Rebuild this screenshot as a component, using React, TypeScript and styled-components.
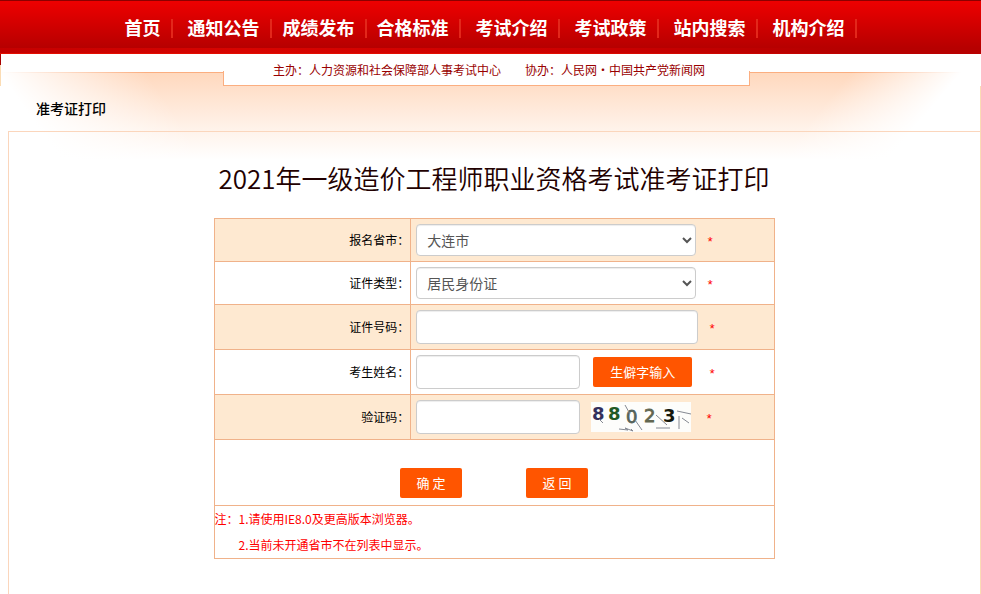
import React from "react";
import styled, { createGlobalStyle } from "styled-components";

const GlobalStyle = createGlobalStyle`
  *, *::before, *::after { box-sizing: border-box; }
  body {
    margin: 0;
    background: #fff;
    color: #000;
    font-family: "Noto Sans CJK SC", sans-serif;
    font-size: 12px;
    line-height: 18px;
  }
`;

const Page = styled.div`
  display: flex;
  flex-direction: column;
  min-height: 100vh;
`;

const NavBar = styled.nav`
  display: flex;
  justify-content: center;
  height: 54px;
  padding-top: 18px;
  border-top: 1px solid #8c0000;
  background:
    linear-gradient(to right, #e30d00 0%, #e30d00 55%, #ba0000 90%) 0 100% / 100% 1px no-repeat,
    linear-gradient(to right, #c40000 0%, #d80400 25%, #cc0000 60%, #b60000 85%) 0 100% / 100% 6px no-repeat,
    linear-gradient(to bottom, #ee0000 0, #b60000 47px);
`;

const NavLink = styled.a<{ $indent: number }>`
  height: 19px;
  padding-left: ${(p) => p.$indent}px;
  padding-right: 10px;
  border-right: 2px solid #e3271b;
  color: #fff;
  font-size: 18px;
  font-weight: 700;
  line-height: 16px;
  text-decoration: none;
  white-space: nowrap;
`;

const Sheet = styled.div`
  display: flex;
  flex: 1;
  flex-direction: column;
  background:
    linear-gradient(#a80000 0 11px, #fbdcb4 11px 32px) 0 0 / 1px 32px no-repeat,
    linear-gradient(#fbdcb4, #fbdcb4) 100% 32px / 1px 100% no-repeat,
    linear-gradient(55deg, #fff 50px, rgba(255, 255, 255, 0) 170px) 0 18px / 50% 88px no-repeat,
    linear-gradient(-50deg, #fff 72px, rgba(255, 255, 255, 0) 156px) 100% 18px / 50% 88px no-repeat,
    linear-gradient(#fbae80, #fbae80) 0 18px / 100% 1px no-repeat,
    linear-gradient(#ffd8bd, #fff2e9 56px, #fff) 0 18px / 100% 88px no-repeat;
`;

const CreditsRow = styled.div`
  display: flex;
  justify-content: center;
  padding-right: 8px;
`;

const Credits = styled.div`
  display: flex;
  justify-content: center;
  gap: 24px;
  width: 527px;
  height: 32px;
  padding: 7px 0 0 5px;
  border-bottom: 1px solid #fbae80;
  background:
    linear-gradient(#fbae80, #fbae80) 0 100% / 1px 14px no-repeat,
    linear-gradient(#fbae80, #fbae80) 100% 100% / 1px 14px no-repeat,
    #fff;
  color: #900;
  white-space: nowrap;
`;

const SectionTitle = styled.h1`
  margin: 0;
  height: 45px;
  padding: 12px 0 0 36px;
  color: #000;
  font-size: 14px;
  font-weight: 500;
  line-height: 20px;
`;

const Panel = styled.main`
  display: flex;
  flex: 1;
  flex-direction: column;
  align-items: center;
  margin-left: 8px;
  padding: 26px 2px 34px 0;
  border-top: 1px solid #fbd6bc;
  border-left: 1px solid #fbd6bc;
`;

const ExamTitle = styled.h2`
  margin: 0 0 20px;
  color: #200;
  font-size: 26px;
  font-weight: 350;
  line-height: 40px;
  text-align: center;
`;

const Form = styled.form`
  width: 100%;
  max-width: 561px;
  border: 1px solid #f0b28a;
`;

const Row = styled.div<{ $tinted?: boolean }>`
  display: grid;
  grid-template-columns: 35% 1fr;
  border-bottom: 1px solid #f0b28a;
  background: ${(p) => (p.$tinted ? "#fee9d1" : "#fff")};
`;

const Label = styled.label`
  display: flex;
  align-items: center;
  justify-content: flex-end;
  padding-right: 1px;
`;

const Field = styled.div`
  display: flex;
  align-items: center;
  padding: 5px;
  border-left: 1px solid #f0b28a;
`;

const Select = styled.select`
  width: 280px;
  height: 32px;
  padding: 0 0 0 6px;
  border: 1px solid #ccc;
  border-radius: 4px;
  background: #fff;
  box-shadow: inset 0 1px 1px rgba(0, 0, 0, 0.075);
  color: #555;
  font-family: inherit;
  font-size: 14px;
`;

const Input = styled.input<{ $short?: boolean }>`
  width: ${(p) => (p.$short ? 164 : 282)}px;
  height: 34px;
  padding: 6px 12px;
  border: 1px solid #ccc;
  border-radius: 4px;
  background: #fff;
  box-shadow: inset 0 1px 1px rgba(0, 0, 0, 0.075);
  color: #555;
  font-family: inherit;
  font-size: 14px;
`;

const Required = styled.span<{ $gap?: number }>`
  margin-left: ${(p) => p.$gap ?? 10}px;
  padding-top: 6px;
  color: #f00;
  font-family: "Liberation Mono", monospace;
  font-size: 13px;
`;

const Button = styled.button`
  min-width: 62px;
  height: 30px;
  padding: 0 16px;
  border: 0;
  border-radius: 2px;
  background: #ff5500;
  color: #fff;
  font-family: inherit;
  font-size: 13px;
  line-height: 30px;
  white-space: nowrap;
`;

const InlineButton = styled(Button)`
  margin-left: 13px;
  padding: 0 17px;
`;

const CaptchaImage = styled.svg`
  display: block;
  margin-left: 11px;
`;

const Actions = styled.div`
  display: flex;
  justify-content: center;
  gap: 64px;
  padding: 28px 0 7px;
  border-bottom: 1px solid #f0b28a;
`;

const Notes = styled.div`
  color: #f00;
  line-height: 26px;
`;

const Note = styled.p<{ $indented?: boolean }>`
  margin: 0;
  padding-left: ${(p) => (p.$indented ? 24 : 0)}px;
`;

const navItems = [
  { text: "首页", indent: 0 },
  { text: "通知公告", indent: 15 },
  { text: "成绩发布", indent: 11 },
  { text: "合格标准", indent: 10 },
  { text: "考试介绍", indent: 15 },
  { text: "考试政策", indent: 15 },
  { text: "站内搜索", indent: 15 },
  { text: "机构介绍", indent: 15 },
];

const digits = [
  { text: "8", x: 1, y: 18, fill: "#33305c", weight: 700 },
  { text: "8", x: 17, y: 18, fill: "#215a26", weight: 700 },
  { text: "0", x: 35, y: 21, fill: "#56635a", weight: 400 },
  { text: "2", x: 53, y: 20, fill: "#626650", weight: 400 },
  { text: "3", x: 72, y: 20, fill: "#15180c", weight: 700 },
];

function Captcha() {
  return (
    <CaptchaImage width="100" height="30" viewBox="0 0 100 30" role="img" aria-label="验证码图片">
      <rect width="100" height="30" fill="#fdfdfb" />
      <g fontFamily="DejaVu Sans, sans-serif" fontSize="18">
        {digits.map((d) => (
          <text
            key={d.x}
            x={d.x}
            y={d.y}
            fill={d.fill}
            fontWeight={d.weight}
            stroke={d.fill}
            strokeWidth={d.weight === 400 ? 0.8 : 0}
          >
            {d.text}
          </text>
        ))}
      </g>
      <g fill="none" stroke="#858992" strokeWidth="1">
        <path d="M8 17l4 4M34 3l5 9M44 18l7 10M65 13l11 10M65 26h14M86 9l14 3M88 14v13M91 16l7 5" />
        <path d="M28 27l9 1l-3-2l8 3l-2-2" />
      </g>
    </CaptchaImage>
  );
}

export default function App() {
  return (
    <Page>
      <GlobalStyle />
      <NavBar>
        {navItems.map((item) => (
          <NavLink key={item.text} href="#" $indent={item.indent}>
            {item.text}
          </NavLink>
        ))}
      </NavBar>
      <Sheet>
        <CreditsRow>
          <Credits>
            <span>主办：人力资源和社会保障部人事考试中心</span>
            <span>协办：人民网・中国共产党新闻网</span>
          </Credits>
        </CreditsRow>
        <SectionTitle>准考证打印</SectionTitle>
        <Panel>
          <ExamTitle>2021年一级造价工程师职业资格考试准考证打印</ExamTitle>
          <Form onSubmit={(e) => e.preventDefault()}>
            <Row $tinted>
              <Label htmlFor="province">报名省市：</Label>
              <Field>
                <Select id="province">
                  <option>大连市</option>
                </Select>
                <Required>*</Required>
              </Field>
            </Row>
            <Row>
              <Label htmlFor="idType">证件类型：</Label>
              <Field>
                <Select id="idType">
                  <option>居民身份证</option>
                </Select>
                <Required>*</Required>
              </Field>
            </Row>
            <Row $tinted>
              <Label htmlFor="idNumber">证件号码：</Label>
              <Field>
                <Input id="idNumber" type="text" />
                <Required>*</Required>
              </Field>
            </Row>
            <Row>
              <Label htmlFor="candidate">考生姓名：</Label>
              <Field>
                <Input id="candidate" type="text" $short />
                <InlineButton type="button">生僻字输入</InlineButton>
                <Required $gap={16}>*</Required>
              </Field>
            </Row>
            <Row $tinted>
              <Label htmlFor="captcha">验证码：</Label>
              <Field>
                <Input id="captcha" type="text" $short />
                <Captcha />
                <Required $gap={14}>*</Required>
              </Field>
            </Row>
            <Actions>
              <Button type="submit">确 定</Button>
              <Button type="button">返 回</Button>
            </Actions>
            <Notes>
              <Note>注：1.请使用IE8.0及更高版本浏览器。</Note>
              <Note $indented>2.当前未开通省市不在列表中显示。</Note>
            </Notes>
          </Form>
        </Panel>
      </Sheet>
    </Page>
  );
}
